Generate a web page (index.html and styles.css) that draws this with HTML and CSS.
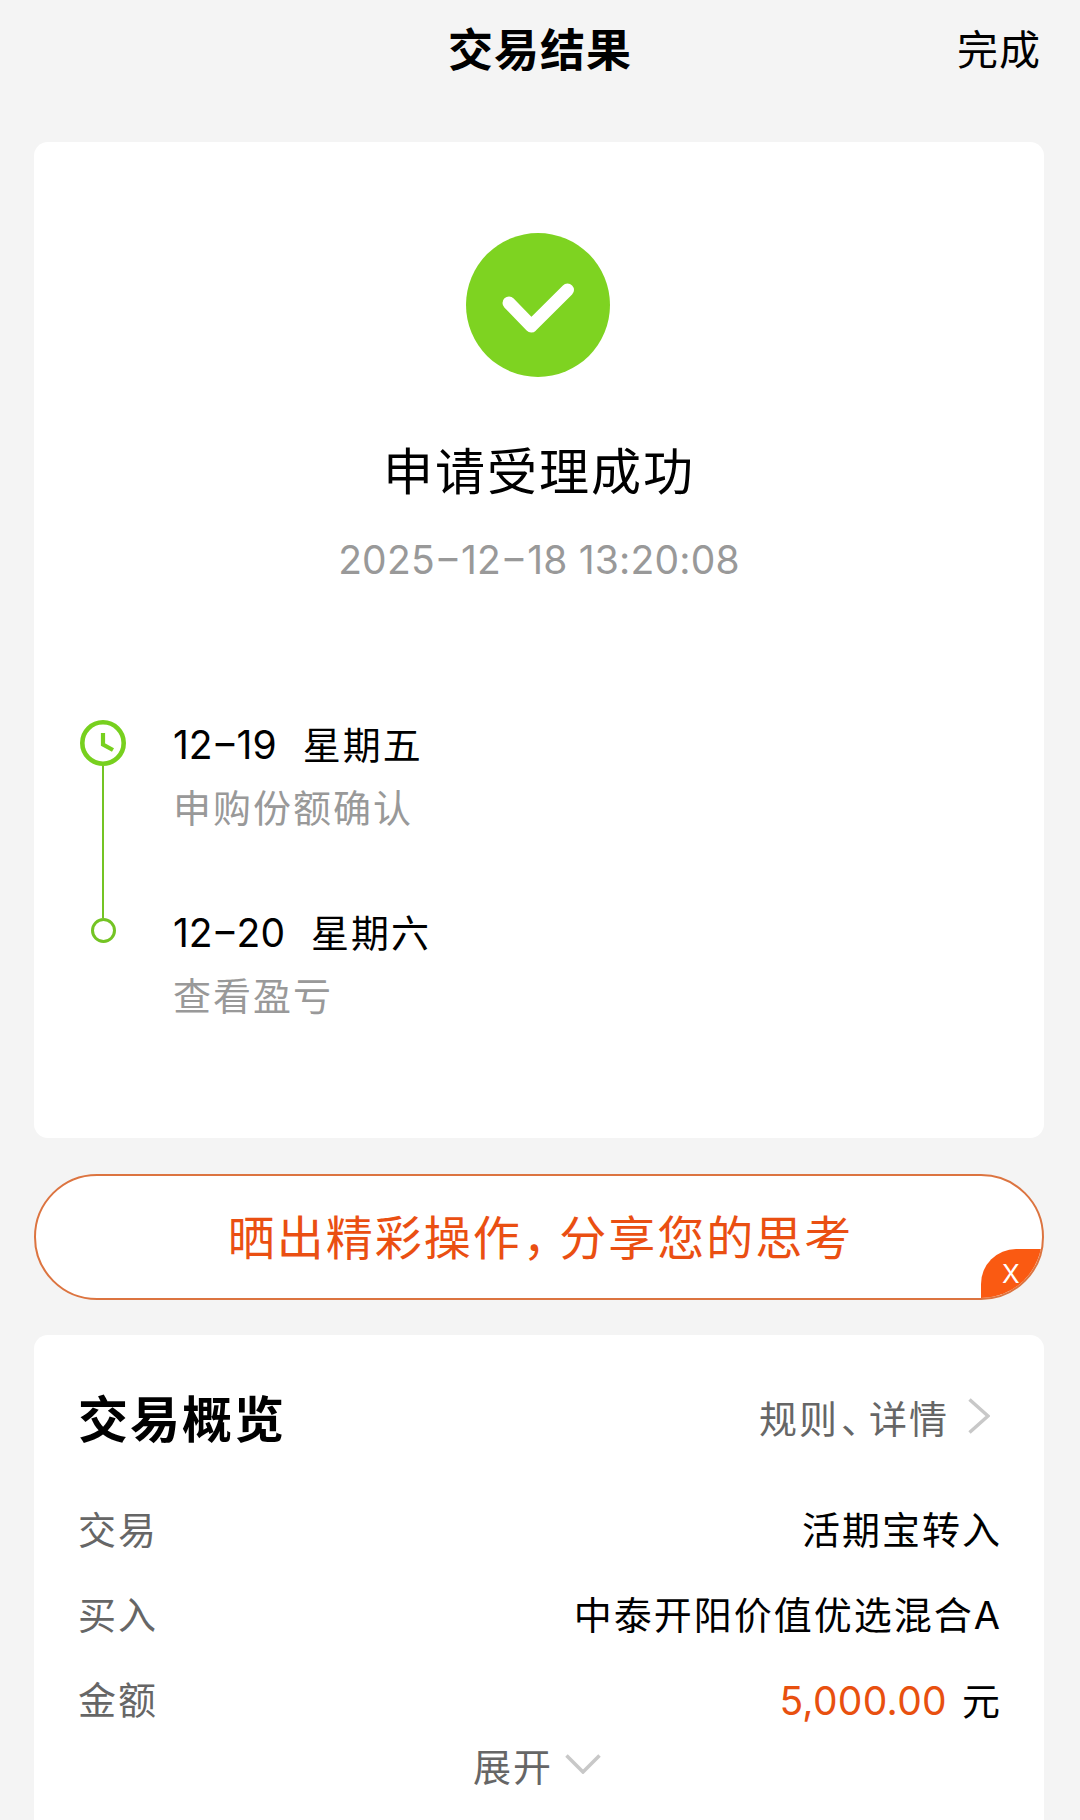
FILE: index.html
```
<!DOCTYPE html>
<html lang="zh-CN">
<head>
  <meta charset="UTF-8">
  <meta name="viewport" content="width=device-width, initial-scale=1.0">
  <title>交易结果</title>
  <link rel="stylesheet" href="styles.css">
</head>
<body>
  <header class="header">
    <h1>交易结果</h1>
    <a class="done">完成</a>
  </header>

  <!-- Result -->
  <section class="card result">
    <svg class="success" viewBox="0 0 144 144">
      <circle cx="72" cy="72" r="72" fill="#7ed321"/>
      <path d="M43 70l22.3 23L101.500 57" fill="none" stroke="#fff" stroke-width="13" stroke-linecap="round" stroke-linejoin="round"/>
    </svg>
    <h2>申请受理成功</h2>
    <p class="time">2025<span class="dash">-</span>12<span class="dash">-</span>18 13:20:08</p>

    <div class="timeline">
      <div class="rail">
        <svg class="clock" viewBox="0 0 46 46">
          <circle cx="23" cy="23" r="20.700" fill="none" stroke="#77d01e" stroke-width="4.600"/>
          <path d="M23 13v11.500l10 5.500" fill="none" stroke="#77d01e" stroke-width="4.200"/>
        </svg>
        <div class="line"></div>
        <div class="dot"></div>
      </div>
      <div class="steps">
        <div class="step">
          <h3><span class="day">12<span class="dash">-</span>19</span>星期五</h3>
          <p>申购份额确认</p>
        </div>
        <div class="step">
          <h3><span class="day">12<span class="dash">-</span>20</span>星期六</h3>
          <p>查看盈亏</p>
        </div>
      </div>
    </div>
  </section>

  <!-- Share -->
  <div class="share">
    <span>晒出精彩操作<span class="comma">，</span>分享您的思考</span>
    <div class="close">X</div>
  </div>

  <!-- Overview -->
  <section class="card overview">
    <div class="overview-top">
      <h2>交易概览</h2>
      <a class="more">规则<span class="pause">、</span>详情
        <svg class="arrow" viewBox="0 0 22 36"><path d="M1.500 1.500L20 18 1.500 34.500" fill="none" stroke="#c8c8c8" stroke-width="3.500"/></svg>
      </a>
    </div>
    <div class="row">
      <span class="label">交易</span>
      <span class="value">活期宝转入</span>
    </div>
    <div class="row">
      <span class="label">买入</span>
      <span class="value">中泰开阳价值优选混合A</span>
    </div>
    <div class="row">
      <span class="label">金额</span>
      <span class="value"><span class="money">5,000.00</span>元</span>
    </div>
    <div class="expand">展开
      <svg class="down" viewBox="0 0 36 20"><path d="M1.500 1.500L18 18 34.500 1.500" fill="none" stroke="#c8c8c8" stroke-width="3.500"/></svg>
    </div>
  </section>
</body>
</html>
```
FILE: styles.css
```
* {
  box-sizing: border-box;
}

body {
  margin: 0;
  height: 1820px;
  overflow: hidden;
  background-color: #f4f4f4;
  color: #000;
  font-family: Inter, "Noto Sans CJK SC", sans-serif;
  font-size: 38px;
  letter-spacing: 2px;
  display: flex;
  flex-direction: column;
}

h1, h2, h3, p {
  margin: 0;
  font-weight: 400;
}

svg {
  display: block;
}

.header {
  height: 142px;
  flex-shrink: 0;
  padding: 21px 39px 0;
  display: grid;
  grid-template-columns: 1fr auto 1fr;
  line-height: 60px;
}

.header h1 {
  grid-column: 2;
  font-size: 45px;
  font-weight: 700;
  letter-spacing: 1px;
}

.done {
  font-size: 41px;
  letter-spacing: 1px;
  text-align: right;
  line-height: 58px;
}

.card {
  margin: 0 36px 0 34px;
  background-color: #fff;
  border-radius: 14px;
  flex-shrink: 0;
}

.result {
  height: 996px;
  padding-top: 91px;
}

.success {
  width: 144px;
  height: 144px;
  margin: 0 auto 0 432px;
}

.result h2 {
  margin-top: 60px;
  font-size: 50px;
  line-height: 70px;
  text-align: center;
}

.time {
  margin-top: 23px;
  color: #999;
  font-size: 39px;
  line-height: 60px;
  letter-spacing: 0.2px;
  text-align: center;
}

/* wide hyphen in dates */
.dash {
  display: inline-block;
  margin: 0 4px;
  transform: translateY(-2px) scaleX(1.5);
}

.timeline {
  display: flex;
  margin-top: 130px;
  padding-left: 46px;
}

.rail {
  width: 46px;
  display: flex;
  flex-direction: column;
  align-items: center;
}

.clock {
  width: 46px;
  height: 46px;
}

.line {
  width: 2px;
  height: 152px;
  background-color: #74c424;
}

.dot {
  width: 25px;
  height: 25px;
  border: 3px solid #74c424;
  border-radius: 50%;
}

.steps {
  padding-left: 47px;
}

.step {
  height: 188px;
}

.step h3 {
  font-size: 38px;
  line-height: 50px;
}

.step p {
  margin-top: 14px;
  color: #999;
  line-height: 48px;
}

.day {
  margin-right: 26px;
  font-size: 39px;
  letter-spacing: 0;
}

.day .dash {
  margin: 0 3px;
}

.share {
  position: relative;
  height: 126px;
  margin: 36px 36px 35px 34px;
  padding-left: 3px;
  flex-shrink: 0;
  background-color: #fff;
  border: 2px solid #dc7440;
  border-radius: 63px;
  overflow: hidden;
  color: #ea4f12;
  font-size: 47px;
  line-height: 123px;
  text-align: center;
}

.comma {
  margin: 0 11px 0 1px;
  font-feature-settings: "halt";
}

.close {
  position: absolute;
  right: 0;
  bottom: 0;
  width: 61px;
  height: 49px;
  padding-left: 21px;
  background-color: #fa5a12;
  border-top-left-radius: 35px;
  color: #fff;
  font-size: 26px;
  line-height: 50px;
  text-align: left;
}

.overview {
  height: 520px;
  padding: 44px 42px 0 44px;
}

.overview-top {
  display: flex;
  justify-content: space-between;
  align-items: center;
  height: 74px;
  margin-bottom: 35px;
}

.overview-top h2 {
  font-size: 50px;
  font-weight: 700;
}

.more {
  display: flex;
  align-items: center;
  color: #666;
  padding-right: 12px;
}

.pause {
  margin: 0 7px 0 2px;
  font-feature-settings: "halt";
}

.arrow {
  width: 22px;
  height: 36px;
  margin-left: 19px;
}

.row {
  display: flex;
  justify-content: space-between;
  line-height: 85px;
}

.label {
  color: #666;
}

.money {
  margin-right: 15px;
  color: #e8500f;
  font-size: 39px;
  letter-spacing: 0.3px;
}

.expand {
  display: flex;
  justify-content: center;
  align-items: center;
  height: 40px;
  padding-right: 6px;
  color: #666;
}

.down {
  width: 36px;
  height: 20px;
  margin-left: 12px;
}
```
